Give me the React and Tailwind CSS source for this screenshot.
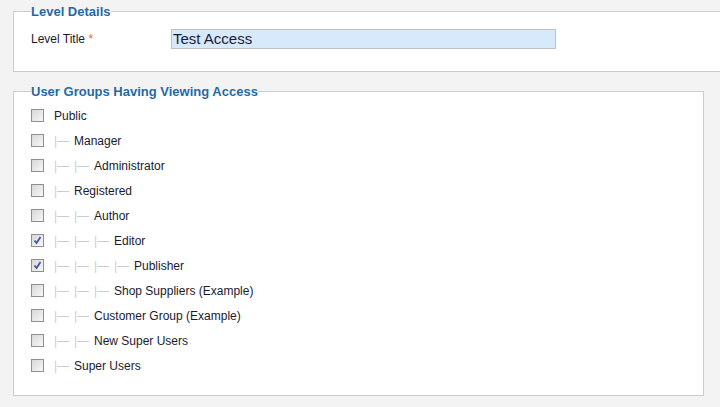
import React from "react";

const groups = [
  { name: "Public", level: 0 },
  { name: "Manager", level: 1 },
  { name: "Administrator", level: 2 },
  { name: "Registered", level: 1 },
  { name: "Author", level: 2 },
  { name: "Editor", level: 3, checked: true },
  { name: "Publisher", level: 4, checked: true },
  { name: "Shop Suppliers (Example)", level: 3 },
  { name: "Customer Group (Example)", level: 2 },
  { name: "New Super Users", level: 2 },
  { name: "Super Users", level: 1 },
];

function Checkbox({ checked }) {
  return (
    <span className="flex h-[13px] w-[13px] shrink-0 items-center justify-center border border-[#8f8f8f] bg-gradient-to-br from-[#d8d8d8] to-[#f7f7f7]">
      {checked && (
        <svg width="9" height="9" viewBox="0 0 9 9">
          <path d="M1.5 4.5 L3.5 7 L7.5 1" fill="none" stroke="#3d5a9e" strokeWidth="1.8" />
        </svg>
      )}
    </span>
  );
}

function GroupRow({ group }) {
  const indents = Array.from({ length: group.level });
  return (
    <li className="flex h-[25px] items-center">
      <Checkbox checked={group.checked} />
      <span className="ml-[10px] flex items-center">
        {indents.map((_, i) => (
          <span key={i} className="inline-block w-[20px] text-[#c9cdd2]">
            |—
          </span>
        ))}
        <span>{group.name}</span>
      </span>
    </li>
  );
}

export default function App() {
  return (
    <div className="min-h-[407px] overflow-hidden bg-[#f3f3f3] pt-[4px] pl-[13px] font-['Liberation_Sans',Arial,sans-serif] text-[12px] text-[#1a1a2e]">
      {/* Level details */}
      <fieldset className="w-[720px] border border-[#cccccc] bg-white pr-4 pb-[22px] pl-[17px]">
        <legend className="p-0 text-[13px] leading-[15px] font-bold text-[#1f6aa5]">
          Level Details
        </legend>
        <div className="mt-[10px] flex items-center">
          <label className="w-[140px]">
            Level Title <span className="text-[#e8672e]">*</span>
          </label>
          <div className="flex h-[20px] w-[385px] items-center border border-[#c0c0c0] bg-[#d6eafc] px-[1px] text-[15px] text-[#1a1a3a]">
            Test Access
          </div>
        </div>
      </fieldset>

      {/* Viewing access */}
      <fieldset className="mt-[12px] w-[691px] border border-[#cccccc] bg-white pr-4 pt-[4px] pb-[17px] pl-[17px]">
        <legend className="p-0 text-[13px] leading-[15px] font-bold text-[#1f6aa5]">
          User Groups Having Viewing Access
        </legend>
        <ul>
          {groups.map((g) => (
            <GroupRow key={g.name} group={g} />
          ))}
        </ul>
      </fieldset>
    </div>
  );
}
